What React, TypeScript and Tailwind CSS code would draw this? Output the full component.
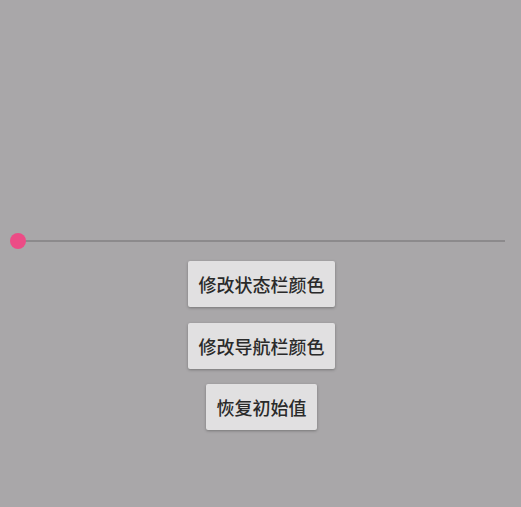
import React from "react";

const font = { fontFamily: '"Noto Sans CJK SC", "Noto Sans", sans-serif' };

function Btn({ label, w }: { label: string; w: string }) {
  return (
    <button
      className={`${w} h-[46px] rounded-[2px] bg-[#e1e0e1] text-[18px] leading-none font-medium text-[#2a2a2a] shadow-[0_1px_3px_rgba(0,0,0,0.3)]`}
      style={font}
    >
      {label}
    </button>
  );
}

export default function App() {
  return (
    <div className="w-[521px] h-[507px] bg-[#a9a7a9] flex flex-col" style={font}>
      <div className="h-[233px]" />
      <div className="h-[16px] flex items-center pl-[18px] pr-[16px]">
        <div className="relative h-[2px] flex-1 bg-[#8c8a8c]">
          <div className="absolute left-[-8px] top-[-7px] w-[16px] h-[16px] rounded-full bg-[#ec4c86]" />
        </div>
      </div>
      <div className="mt-[12px] pl-[2px] flex flex-col items-center gap-[16px]">
        <Btn label="修改状态栏颜色" w="w-[147px]" />
        <Btn label="修改导航栏颜色" w="w-[147px]" />
        <div className="-mt-[1px]">
          <Btn label="恢复初始值" w="w-[111px]" />
        </div>
      </div>
    </div>
  );
}
